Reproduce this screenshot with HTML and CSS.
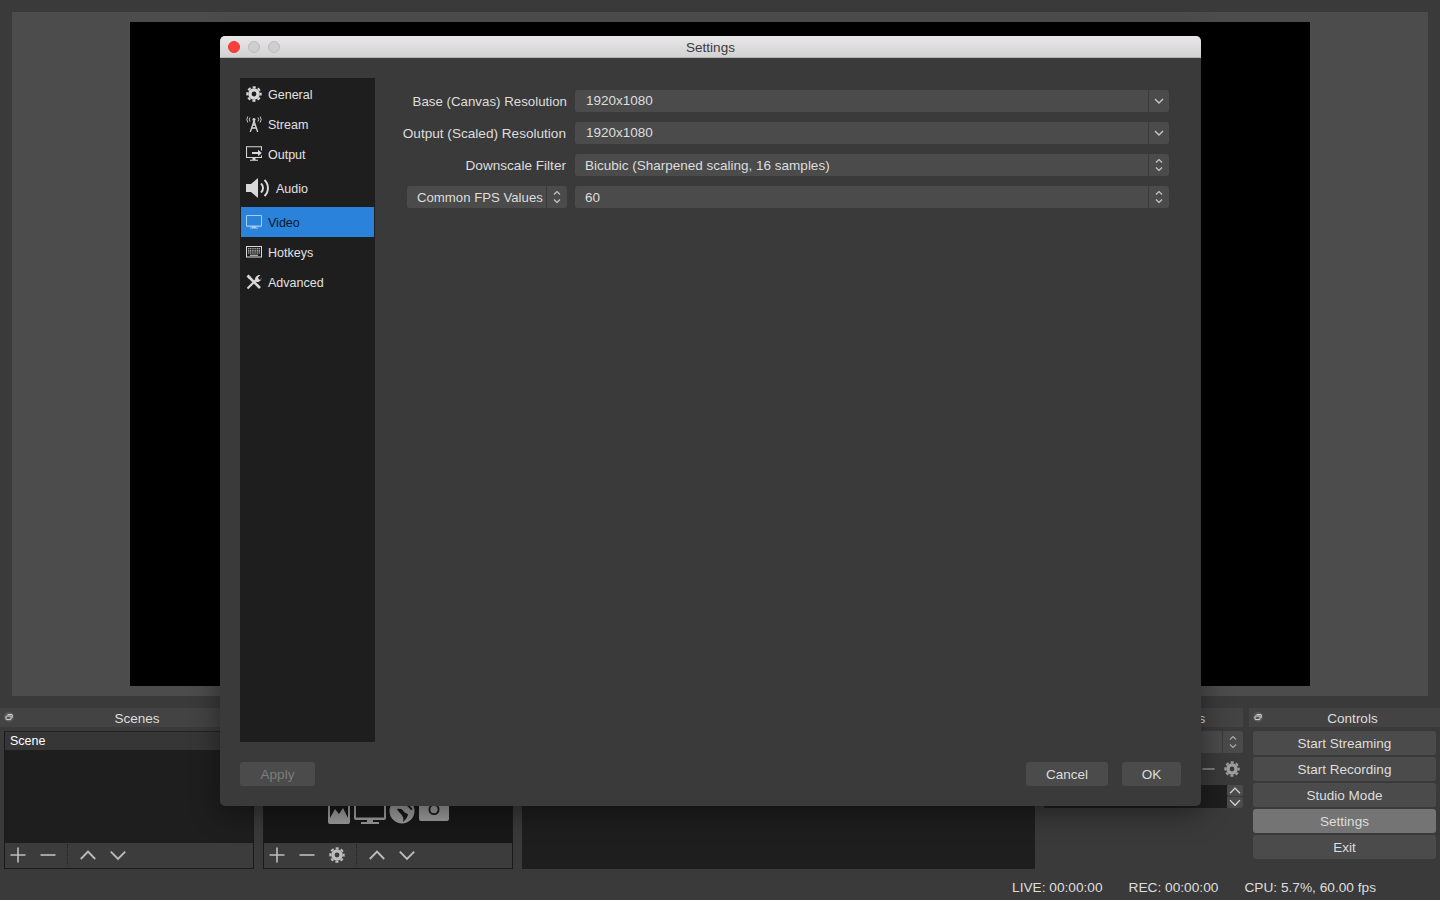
FILE: index.html
```html
<!DOCTYPE html>
<html lang="en">
<head>
<meta charset="utf-8">
<title>OBS Settings</title>
<link rel="stylesheet" href="styles.css">
</head>
<body>
<svg class="defs" width="0" height="0" aria-hidden="true">
  <defs>
    <symbol id="gear" viewBox="0 0 16 16">
      <circle cx="8" cy="8" r="4.100" fill="none" stroke="currentColor" stroke-width="3.400"/>
      <circle cx="8" cy="8" r="6.700" fill="none" stroke="currentColor" stroke-width="2" stroke-dasharray="3.100 2.162" stroke-dashoffset="1.550"/>
    </symbol>
    <symbol id="plus" viewBox="0 0 16 16"><path d="M8 0.500V15.500M0.500 8H15.500" fill="none" stroke="currentColor" stroke-width="1.600"/></symbol>
    <symbol id="minus" viewBox="0 0 16 16"><path d="M0.500 8H15.500" fill="none" stroke="currentColor" stroke-width="1.600"/></symbol>
    <symbol id="up" viewBox="0 0 16 16"><path d="M0.800 12L8 4.600L15.200 12" fill="none" stroke="currentColor" stroke-width="1.800"/></symbol>
    <symbol id="down" viewBox="0 0 16 16"><path d="M0.800 4.600L8 12L15.200 4.600" fill="none" stroke="currentColor" stroke-width="1.800"/></symbol>
    <symbol id="float" viewBox="0 0 10 10"><circle cx="5" cy="5" r="5" fill="#575757"/><rect x="2" y="4" width="5" height="3.600" rx=".6" fill="none" stroke="#ddd" stroke-width="1"/><path d="M3.600 2.600H8.200V5.800" fill="none" stroke="#ddd" stroke-width="1"/></symbol>
    <symbol id="chev" viewBox="0 0 10 6"><path d="M1 1L5 5L9 1" fill="none" stroke="currentColor" stroke-width="1.400"/></symbol>
    <symbol id="updown" viewBox="0 0 10 16"><path d="M2 5.500L5 2.500L8 5.500M2 10.500L5 13.500L8 10.500" fill="none" stroke="currentColor" stroke-width="1.200"/></symbol>
  </defs>
</svg>

<main class="app">
  <section class="preview"><div class="canvas"></div></section>

  <section class="docks">
    <div class="dock dock-scenes">
      <header class="dock-title"><svg class="float"><use href="#float"/></svg><span>Scenes</span></header>
      <div class="panel">
        <div class="list"><div class="list-row">Scene</div></div>
        <div class="toolbar">
          <svg class="tb"><use href="#plus"/></svg>
          <svg class="tb"><use href="#minus"/></svg>
          <i class="tb-sep"></i>
          <svg class="tb"><use href="#up"/></svg>
          <svg class="tb"><use href="#down"/></svg>
        </div>
      </div>
    </div>

    <div class="dock dock-sources">
      <header class="dock-title"><span>Sources</span></header>
      <div class="panel">
        <div class="list list-sources">
          <div class="source-icons">
            <svg class="si si-image" viewBox="0 0 22 24"><path fill-rule="evenodd" d="M2 0H20A2 2 0 0 1 22 2V22A2 2 0 0 1 20 24H2A2 2 0 0 1 0 22V2A2 2 0 0 1 2 0ZM2 3V18L7 9L11 14L15 8L20 18V3H13V6L11 4.500L9 6V3Z"/></svg>
            <svg class="si si-monitor" viewBox="0 0 32 24"><path fill-rule="evenodd" d="M2 0H30A2 2 0 0 1 32 2V18A2 2 0 0 1 30 20H19V22H25V24H7V22H13V20H2A2 2 0 0 1 0 18V2A2 2 0 0 1 2 0ZM2 2V17.500H30V2Z"/></svg>
            <svg class="si si-globe" viewBox="0 0 26 24"><circle cx="13" cy="11" r="12.500"/><path d="M11 0C14 1 19 3 22 7C24 9 24 10 22 10C20 7 17 5 14 4C12 3 11 2 11 0ZM8 9C11 8 14 9 15 12C17 14 19 13 19 15C18 18 16 20 14 22C15 19 14 16 12 14C10 12 9 11 8 9Z" fill="#181818"/></svg>
            <svg class="si si-camera" viewBox="0 0 30 24"><path fill-rule="evenodd" d="M2 1H28A2 2 0 0 1 30 3V19A2 2 0 0 1 28 21H2A2 2 0 0 1 0 19V3A2 2 0 0 1 2 1ZM15 4A5.500 5.500 0 1 0 15 15A5.500 5.500 0 1 0 15 4Z"/><circle cx="15" cy="9.500" r="3.700"/></svg>
          </div>
        </div>
        <div class="toolbar">
          <svg class="tb"><use href="#plus"/></svg>
          <svg class="tb"><use href="#minus"/></svg>
          <svg class="tb"><use href="#gear"/></svg>
          <i class="tb-sep"></i>
          <svg class="tb"><use href="#up"/></svg>
          <svg class="tb"><use href="#down"/></svg>
        </div>
      </div>
    </div>

    <div class="dock dock-mixer">
      <header class="dock-title"><span>Mixer</span></header>
      <div class="mixer-body"></div>
    </div>

    <div class="dock dock-trans">
      <header class="dock-title"><span>Scene Transitions</span></header>
      <div class="trans-body">
        <div class="trans-combo"><span class="trans-arrow"><svg class="ud"><use href="#updown"/></svg></span></div>
        <div class="trans-row"><svg class="trans-minus"><use href="#minus"/></svg><svg class="trans-gear"><use href="#gear"/></svg></div>
        <div class="trans-dur">
          <div class="trans-field"></div>
          <div class="trans-steps">
            <span class="step"><svg class="step-ic"><use href="#up"/></svg></span>
            <span class="step"><svg class="step-ic"><use href="#down"/></svg></span>
          </div>
        </div>
      </div>
    </div>

    <div class="dock dock-controls">
      <header class="dock-title"><svg class="float"><use href="#float"/></svg><span>Controls</span></header>
      <div class="controls">
        <button class="btn ctl">Start Streaming</button>
        <button class="btn ctl">Start Recording</button>
        <button class="btn ctl">Studio Mode</button>
        <button class="btn ctl ctl-active">Settings</button>
        <button class="btn ctl">Exit</button>
      </div>
    </div>
  </section>

  <footer class="status">
    <span>LIVE: 00:00:00</span>
    <span>REC: 00:00:00</span>
    <span>CPU: 5.7%, 60.00 fps</span>
  </footer>
</main>

<div class="dialog">
  <header class="titlebar">
    <div class="lights"><i class="light light-close"></i><i class="light"></i><i class="light"></i></div>
    <span class="title-text">Settings</span>
  </header>
  <div class="dialog-body">
    <div class="dialog-main">
      <nav class="sidebar">
        <a class="nav"><svg class="nav-ic"><use href="#gear"/></svg><span class="nav-text">General</span></a>
        <a class="nav"><svg class="nav-ic" viewBox="0 0 16 16"><g fill="none" stroke="currentColor" stroke-width=".9"><path d="M1.800 .5A5.500 5.500 0 0 0 1.800 6.500M14.200 .5A5.500 5.500 0 0 1 14.200 6.500M4 1.500A3.500 3.500 0 0 0 4 5.500M12 1.500A3.500 3.500 0 0 1 12 5.500"/><path d="M8 5L4.300 16M8 5L11.700 16M5.700 12H10.300M6.600 9H9.400" stroke-width="1.300"/></g><circle cx="8" cy="3.500" r="1.500" fill="currentColor"/></svg><span class="nav-text">Stream</span></a>
        <a class="nav"><svg class="nav-ic" viewBox="0 0 16 16"><path d="M15.500 4.500V.8H.5V11.500H15.500V9.500" fill="none" stroke="currentColor" stroke-width="1.100"/><path d="M4 13.800H12V14.800H4ZM6.500 11.500H9.500V14H6.500ZM6 6H12V3.800L15.800 7L12 10.200V8H6Z" fill="currentColor"/></svg><span class="nav-text">Output</span></a>
        <a class="nav nav-audio"><svg class="nav-ic-audio" viewBox="0 0 24 20"><path d="M0 6H5L12 0V20L5 14H0Z" fill="currentColor"/><path d="M15 5.500A6 6 0 0 1 15 14.500M18.500 2A11 11 0 0 1 18.500 18" fill="none" stroke="currentColor" stroke-width="2"/></svg><span class="nav-text">Audio</span></a>
        <a class="nav nav-active"><svg class="nav-ic" viewBox="0 0 16 16"><path fill-rule="evenodd" d="M1 1H15A1 1 0 0 1 16 2V11.700A1 1 0 0 1 15 12.700H10V13.500H12V14.500H4V13.500H6V12.700H1A1 1 0 0 1 0 11.700V2A1 1 0 0 1 1 1ZM1 2V11.500H15V2Z" fill="#a9cdf0"/></svg><span class="nav-text">Video</span></a>
        <a class="nav"><svg class="nav-ic" viewBox="0 0 16 16"><rect x=".5" y="2.500" width="15" height="10.500" fill="none" stroke="currentColor"/><path d="M2 4.800H14M2 6.900H14M2 9H14" stroke="currentColor" stroke-width="1.100" stroke-dasharray="1.200 .6" fill="none"/><path d="M4 11.200H12" stroke="currentColor" stroke-width="1.100" fill="none"/></svg><span class="nav-text">Hotkeys</span></a>
        <a class="nav"><svg class="nav-ic" viewBox="0 0 16 16"><path d="M3.500 3.500L14 14" stroke="currentColor" stroke-width="2.600" fill="none"/><path d="M.5 2.500L2.500 .5L5 3L3 5Z" fill="currentColor"/><path d="M1.500 14.500L10 6" stroke="currentColor" stroke-width="2" fill="none"/><path d="M9 6.500C8.500 3.500 11 .5 14.500 1L12 3.500L12.800 5.200L14.500 6L15.500 3.500C15.800 7 12 9 9.500 7.500Z" fill="currentColor"/></svg><span class="nav-text">Advanced</span></a>
      </nav>
      <form class="form">
        <div class="form-row">
          <label class="label">Base (Canvas) Resolution</label>
          <div class="combo"><span class="combo-val combo-val-edit">1920x1080</span><span class="combo-arrow"><svg class="chev"><use href="#chev"/></svg></span></div>
        </div>
        <div class="form-row">
          <label class="label label-tight">Output (Scaled) Resolution</label>
          <div class="combo"><span class="combo-val combo-val-edit">1920x1080</span><span class="combo-arrow"><svg class="chev"><use href="#chev"/></svg></span></div>
        </div>
        <div class="form-row">
          <label class="label label-tight">Downscale Filter</label>
          <div class="combo"><span class="combo-val combo-val-low">Bicubic (Sharpened scaling, 16 samples)</span><span class="combo-arrow"><svg class="ud"><use href="#updown"/></svg></span></div>
        </div>
        <div class="form-row">
          <div class="combo combo-fps"><span class="combo-val combo-val-low combo-val-fps">Common FPS Values</span><span class="combo-arrow"><svg class="ud"><use href="#updown"/></svg></span></div>
          <div class="combo"><span class="combo-val combo-val-low">60</span><span class="combo-arrow"><svg class="ud"><use href="#updown"/></svg></span></div>
        </div>
      </form>
    </div>
    <div class="dialog-actions">
      <button class="btn act act-apply">Apply</button>
      <span class="spacer"></span>
      <button class="btn act act-cancel">Cancel</button>
      <button class="btn act act-ok">OK</button>
    </div>
  </div>
</div>
</body>
</html>
```

FILE: styles.css
```css
* { box-sizing: border-box; }
html, body { margin: 0; height: 100%; }
body {
  width: 1440px;
  height: 900px;
  overflow: hidden;
  position: relative;
  background: #3a3a3a;
  color: #dedede;
  font-family: "Liberation Sans", Arial, sans-serif;
  font-size: 13.500px;
}
.defs { position: absolute; }
.app { display: flex; flex-direction: column; height: 900px; }

/* preview */
.preview { margin: 12px 12px 0; height: 684px; padding: 10px 118px; background: #4c4c4c; }
.canvas { height: 100%; background: #000; }

/* docks */
.docks { display: flex; margin-top: 12px; height: 161px; }
.dock { display: flex; flex-direction: column; flex: none; }
.dock-scenes { width: 258px; }
.dock-sources { width: 250px; margin-left: 5px; }
.dock-mixer { width: 513px; margin-left: 9px; }
.dock-trans { width: 199px; margin-left: 9px; }
.dock-controls { width: 191px; margin-left: 6px; }
.dock-title {
  position: relative;
  height: 19px;
  line-height: 21px;
  text-align: center;
  background: #434343;
  padding-left: 16px;
  flex: none;
}
.float { position: absolute; left: 4px; top: 4px; width: 10px; height: 10px; }
.panel {
  margin: 4px 5px 0 4px;
  width: 250px;
  height: 138px;
  display: flex;
  flex-direction: column;
  border: 1px solid #1a1a1a;
  border-top-color: #222;
}
.dock-sources .panel { margin-left: 0; }
.list { flex: 1; background: #1e1e1e; min-height: 0; }
.list-row { height: 18px; line-height: 18px; padding-left: 5px; background: #363636; color: #fff; font-size: 12.500px; }
.list-sources { background: #181818; position: relative; overflow: hidden; }
.source-icons { display: flex; align-items: flex-end; gap: 4px; padding: 68px 0 0 64px; }
.si { height: 24px; flex: none; fill: #9c9c9c; }
.si-image { width: 22px; }
.si-monitor { width: 32px; }
.si-globe { width: 26px; margin-left: -1px; }
.si-camera { width: 30px; }
.toolbar { display: flex; align-items: center; height: 25px; padding: 0 0 1px 5px; background: #3c3c3c; color: #bdbdbd; flex: none; }
.tb { width: 16px; height: 16px; margin-right: 14px; flex: none; }
.tb-sep { width: 1px; height: 22px; border-left: 1px dotted #222; margin: 0 12px 0 -3px; flex: none; }
.mixer-body { margin-top: 4px; height: 138px; background: #1e1e1e; }

/* transitions */
.trans-body { padding-top: 4px; }
.trans-combo { height: 22px; display: flex; justify-content: flex-end; background: #4b4b4b; border-radius: 3px; }
.trans-arrow { width: 21px; border-left: 1px solid #3a3a3a; display: flex; align-items: center; justify-content: center; color: #a8a8a8; }
.trans-row { height: 32px; display: flex; justify-content: flex-end; align-items: center; color: #a0a0a0; padding-right: 3px; gap: 9px; }
.trans-minus { width: 13px; height: 16px; }
.trans-gear { width: 16px; height: 16px; }
.trans-dur { display: flex; height: 23px; }
.trans-field { flex: 1; background: #1e1e1e; }
.trans-steps { width: 16px; display: flex; flex-direction: column; gap: 1px; }
.step { flex: 1; background: #4b4b4b; display: flex; align-items: center; justify-content: center; color: #d8d8d8; border-radius: 2px; }
.step-ic { width: 12px; height: 11px; }

/* buttons */
.btn {
  font: inherit;
  color: #dedede;
  background: #4b4b4b;
  border: 0;
  border-radius: 3px;
  padding: 0;
}
.controls { display: flex; flex-direction: column; gap: 2px; padding: 4px 4px 0; }
.ctl { height: 24px; }
.ctl-active { background: #747474; }

/* status */
.status { display: flex; justify-content: flex-end; gap: 26px; padding: 11px 64px 0 0; line-height: 16px; font-size: 13.700px; }

/* dialog */
.dialog {
  position: absolute;
  left: 220px;
  top: 36px;
  width: 981px;
  height: 770px;
  display: flex;
  flex-direction: column;
  background: #3a3a3a;
  border-radius: 5px;
  box-shadow: 0 6px 30px rgba(0, 0, 0, .45);
  overflow: hidden;
}
.titlebar {
  position: relative;
  flex: none;
  height: 22px;
  line-height: 23px;
  text-align: center;
  background: linear-gradient(#e9e7e9, #d3d2d3);
  border-bottom: 1px solid #b4b4b4;
  color: #3a3a3a;
}
.lights { position: absolute; left: 8px; top: 5px; display: flex; gap: 8px; }
.light { width: 12px; height: 12px; border-radius: 50%; background: #cfcdcf; border: 1px solid #bdbbbd; }
.light-close { background: #fc3d39; border-color: #e33e32; }
.dialog-body { flex: 1; display: flex; flex-direction: column; padding: 20px; min-height: 0; }
.dialog-main { flex: none; height: 664px; display: flex; }
.sidebar {
  flex: none;
  width: 135px;
  height: 664px;
  padding: 1px;
  background: #1e1e1e;
  display: flex;
  flex-direction: column;
}
.nav { height: 30px; display: flex; align-items: center; padding-left: 5px; gap: 6px; color: #e2e2e2; font-size: 12.500px; flex: none; }
.nav-text { padding-top: 2px; }
.nav-ic { width: 16px; height: 16px; flex: none; color: #d8d8d8; }
.nav-audio { height: 38px; }
.nav-ic-audio { width: 24px; height: 20px; flex: none; color: #d8d8d8; }
.nav-active { background: #2a82da; color: #0c1a2a; }
.form { flex: 1; display: flex; flex-direction: column; gap: 10px; padding: 12px 12px 0 0; }
.form-row { display: flex; align-items: center; height: 22px; gap: 8px; }
.label { width: 192px; text-align: right; flex: none; font-size: 13.300px; }
.label-tight { padding-right: 1px; font-size: 13.600px; }
.combo { flex: 1; height: 22px; display: flex; background: #4b4b4b; border-radius: 3px; line-height: 22px; }
.combo-fps { flex: none; width: 160px; margin-left: 32px; }
.combo-val { flex: 1; padding-left: 10px; white-space: nowrap; }
.combo-val-edit { padding-left: 11px; }
.combo-val-low { line-height: 24px; }
.combo-val-fps { font-size: 13.200px; }
.combo-arrow { flex: none; width: 21px; border-left: 1px solid #3a3a3a; display: flex; align-items: center; justify-content: center; color: #c8c8c8; }
.chev { width: 10px; height: 6px; }
.ud { width: 10px; height: 16px; }
.dialog-actions { flex: none; height: 24px; margin-top: 20px; display: flex; gap: 14px; }
.spacer { flex: 1; }
.act { height: 24px; }
.act-apply { width: 75px; color: #7c7c7c; }
.act-cancel { width: 82px; }
.act-ok { width: 59px; }
```
